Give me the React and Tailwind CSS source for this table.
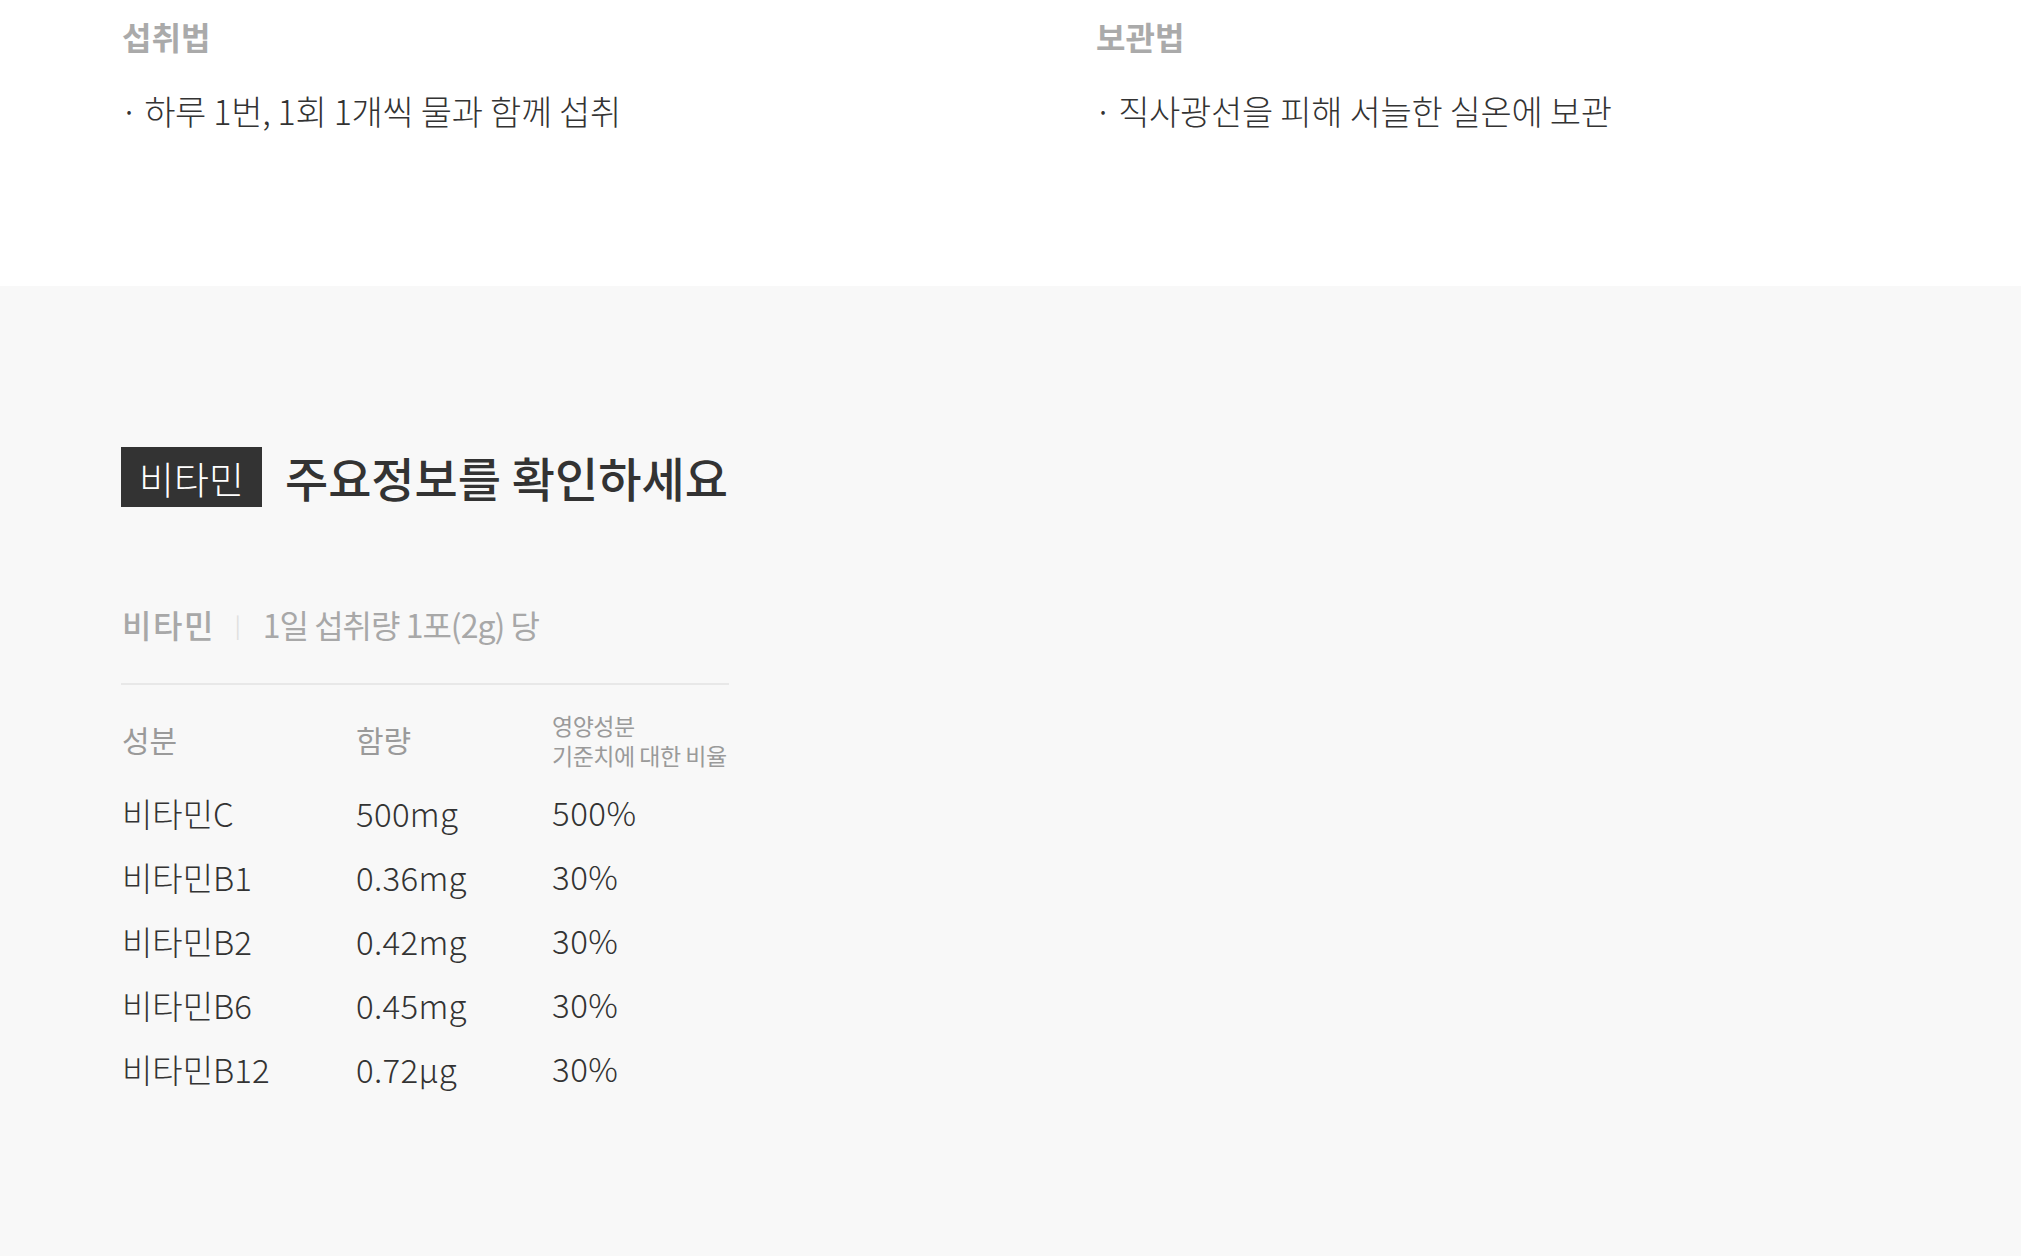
import React from 'react';

const rows = [
  { name: '비타민C', amount: '500mg', ratio: '500%' },
  { name: '비타민B1', amount: '0.36mg', ratio: '30%' },
  { name: '비타민B2', amount: '0.42mg', ratio: '30%' },
  { name: '비타민B6', amount: '0.45mg', ratio: '30%' },
  { name: '비타민B12', amount: '0.72μg', ratio: '30%' },
];

function App() {
  return (
    <div className="min-h-screen flex flex-col bg-[#f8f8f8] font-['Noto_Sans_CJK_KR','Noto_Sans',sans-serif]">
      {/* 섭취법 / 보관법 */}
      <section className="bg-white h-[286px] px-[122px] pt-3">
        <div className="grid grid-cols-[974px_1fr]">
          <div>
            <h3 className="text-[32px] leading-[48px] font-bold text-[#aaaaaa]">섭취법</h3>
            <p className="mt-[27px] text-[34px] leading-[48px] font-light text-[#333] tracking-[-0.3px]"><span className="-ml-[2px] mr-[6px]">·</span>하루 1번, 1회 1개씩 물과 함께 섭취</p>
          </div>
          <div>
            <h3 className="text-[32px] leading-[48px] font-bold text-[#aaaaaa]">보관법</h3>
            <p className="mt-[27px] text-[34px] leading-[48px] font-light text-[#333] tracking-[-0.3px]"><span className="-ml-[2px] mr-[6px]">·</span>직사광선을 피해 서늘한 실온에 보관</p>
          </div>
        </div>
      </section>

      {/* 주요정보 */}
      <section className="flex-grow px-[121px] pt-[156px] pb-24">
        <div className="flex items-center gap-[23px]">
          <span className="bg-[#333] text-white h-[60px] px-[18px] flex items-center text-[38px] font-light">비타민</span>
          <h2 className="text-[47px] font-medium text-[#333]">주요정보를 확인하세요</h2>
        </div>

        <div className="w-[608px] mt-[87px]">
          <div className="flex items-center pb-[35px] border-b-2 border-[#e8e8e8] text-[32px] leading-[48px]">
            <span className="font-medium text-[#a8a8a8] pl-px tracking-[1.5px]">비타민</span>
            <span className="ml-[20px] mr-[22px] text-[#e0e0e0] text-[22px]">|</span>
            <span className="text-[#a8a8a8] tracking-[-1px]">1일 섭취량 1포(2g) 당</span>
          </div>

          <div className="grid grid-cols-[234px_196px_1fr] items-center mt-[25px] text-[#9a9a9a] pl-px">
            <span className="text-[30px]">성분</span>
            <span className="text-[30px]">함량</span>
            <span className="text-[23px] leading-[30px] tracking-[-0.5px]">영양성분<br />기준치에 대한 비율</span>
          </div>

          <div className="mt-[12px] pl-px">
            {rows.map((r, i) => (
              <div key={i} className="grid grid-cols-[234px_196px_1fr] h-[64px] items-center text-[33px] font-light text-[#333]">
                <span>{r.name}</span>
                <span className="tracking-[0.3px]">{r.amount}</span>
                <span className="-mt-[2px] tracking-[0.5px]">{r.ratio}</span>
              </div>
            ))}
          </div>
        </div>
      </section>
    </div>
  );
}

export default App;
